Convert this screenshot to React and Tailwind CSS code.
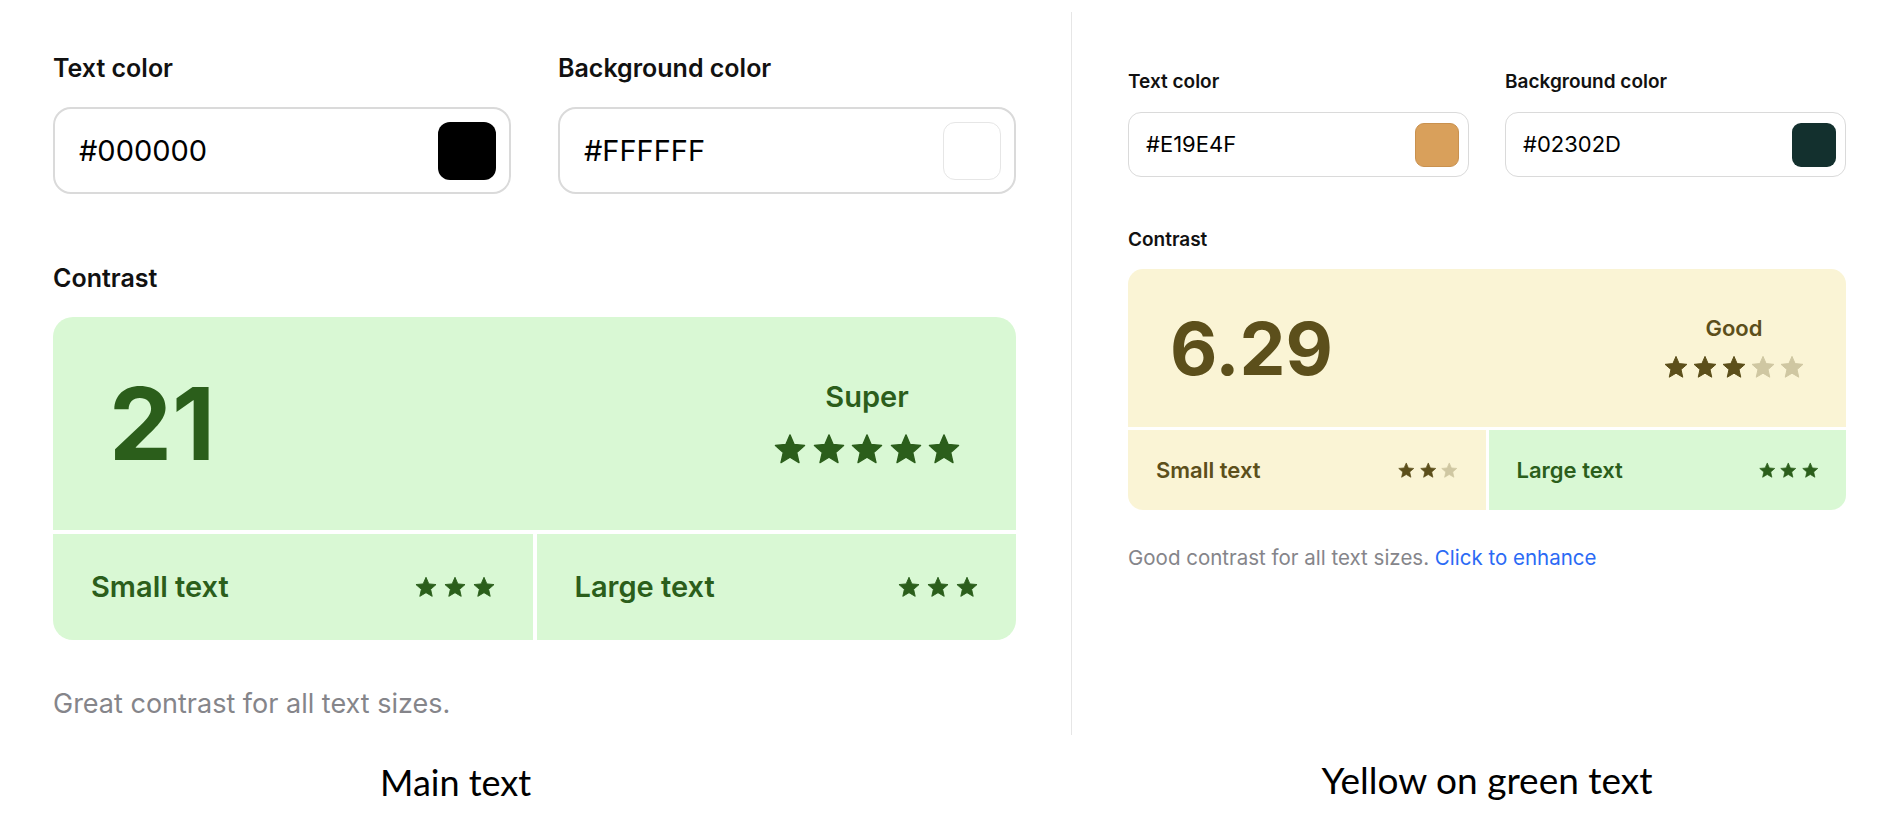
import React from "react";

const GREEN_FG = "#2b5e1b";
const OLIVE = "#5c4f1b";
const OLIVE_FADED = "#cfc7a2";

const STAR_POINTS =
  "12,1.4 15.12,8.61 22.94,9.35 17.04,14.54 18.76,22.2 12,18.2 5.24,22.2 6.96,14.54 1.06,9.35 8.88,8.61";

const Star = ({ size, color }) => (
  <svg width={size} height={size} viewBox="0 0 24 24" className="shrink-0">
    <polygon points={STAR_POINTS} fill={color} stroke={color} strokeWidth="1" strokeLinejoin="round" />
  </svg>
);

// colors: array of star colours, one entry per star
const Stars = ({ colors, size, className }) => (
  <div className={`flex items-center ${className}`}>
    {colors.map((c, i) => (
      <Star key={i} size={size} color={c} />
    ))}
  </div>
);

const Swatch = ({ className, color }) => (
  <div className={className} style={{ backgroundColor: color }} />
);

const App = () => {
  return (
    <div className="w-[1889px] h-[816px] bg-white overflow-hidden font-['Inter','Noto_Sans',sans-serif]">
      <div className="flex mt-[12px]">
        {/* Main text panel */}
        <div className="w-[1072px] h-[723px] border-r border-[#e6e6e6] pl-[53px] pt-[40px]">
          <div className="w-[963px] grid grid-cols-2 gap-[47px]">
            <div>
              <div className="text-[25px] leading-[32px] font-semibold text-[#111]">Text color</div>
              <div className="mt-[23px] h-[87px] border-2 border-[#dadada] rounded-[18px] flex items-center justify-between pl-[24px] pr-[13px]">
                <span className="text-[29px] text-black">#000000</span>
                <Swatch className="w-[58px] h-[58px] rounded-[12px]" color="#000000" />
              </div>
            </div>
            <div>
              <div className="text-[25px] leading-[32px] font-semibold text-[#111]">Background color</div>
              <div className="mt-[23px] h-[87px] border-2 border-[#dadada] rounded-[18px] flex items-center justify-between pl-[24px] pr-[13px]">
                <span className="text-[29px] text-black">#FFFFFF</span>
                <Swatch className="w-[58px] h-[58px] rounded-[12px] border border-[#e6e6e6]" color="#ffffff" />
              </div>
            </div>
          </div>

          <div className="mt-[68px] text-[25px] leading-[32px] font-semibold text-[#111]">Contrast</div>

          <div className="mt-[23px] w-[963px] rounded-[20px] overflow-hidden flex flex-col gap-[4px]">
            <div className="h-[213px] bg-[#d9f8d4] flex items-center justify-between px-14">
              <span className="text-[100px] font-bold leading-none text-[#2b5e1b]">21</span>
              <div className="flex flex-col items-center">
                <span className="text-[29px] font-semibold leading-none text-[#2b5e1b]">Super</span>
                <Stars className="mt-[22px] gap-[6.5px]" size={32} colors={[GREEN_FG, GREEN_FG, GREEN_FG, GREEN_FG, GREEN_FG]} />
              </div>
            </div>
            <div className="h-[106px] grid grid-cols-2 gap-[4px]">
              <div className="bg-[#d9f8d4] flex items-center justify-between px-[38px]">
                <span className="text-[29px] font-semibold text-[#2b5e1b]">Small text</span>
                <Stars className="gap-[7px]" size={22} colors={[GREEN_FG, GREEN_FG, GREEN_FG]} />
              </div>
              <div className="bg-[#d9f8d4] flex items-center justify-between px-[38px]">
                <span className="text-[29px] font-semibold text-[#2b5e1b]">Large text</span>
                <Stars className="gap-[7px]" size={22} colors={[GREEN_FG, GREEN_FG, GREEN_FG]} />
              </div>
            </div>
          </div>

          <p className="mt-[46px] text-[27px] leading-[36px] text-[#85858a]">Great contrast for all text sizes.</p>
        </div>

        {/* Yellow on green panel */}
        <div className="pl-[56px] pt-[58px]">
          <div className="w-[718px] grid grid-cols-2 gap-[36px]">
            <div>
              <div className="text-[19px] leading-[24px] font-semibold text-[#111]">Text color</div>
              <div className="mt-[18px] h-[65px] border-[1.5px] border-[#dadada] rounded-[13px] flex items-center justify-between pl-[17px] pr-[9px]">
                <span className="text-[22px] text-black">#E19E4F</span>
                <Swatch className="w-[44px] h-[44px] rounded-[9px] border border-[#c9914f]" color="#d9a05b" />
              </div>
            </div>
            <div>
              <div className="text-[19px] leading-[24px] font-semibold text-[#111]">Background color</div>
              <div className="mt-[18px] h-[65px] border-[1.5px] border-[#dadada] rounded-[13px] flex items-center justify-between pl-[17px] pr-[9px]">
                <span className="text-[22px] text-black">#02302D</span>
                <Swatch className="w-[44px] h-[44px] rounded-[9px]" color="#13302e" />
              </div>
            </div>
          </div>

          <div className="mt-[51px] text-[19px] leading-[24px] font-semibold text-[#111]">Contrast</div>

          <div className="mt-[17px] w-[718px] rounded-[15px] overflow-hidden flex flex-col gap-[3px]">
            <div className="h-[158px] bg-[#faf4d5] flex items-center justify-between px-[42px]">
              <span className="text-[73px] font-bold leading-none text-[#5c4f1b]">6.29</span>
              <div className="flex flex-col items-center">
                <span className="text-[22px] font-semibold leading-none text-[#5c4f1b]">Good</span>
                <Stars className="mt-[16px] gap-[5px]" size={24} colors={[OLIVE, OLIVE, OLIVE, OLIVE_FADED, OLIVE_FADED]} />
              </div>
            </div>
            <div className="h-[80px] grid grid-cols-2 gap-[3px]">
              <div className="bg-[#faf4d5] flex items-center justify-between px-[28px]">
                <span className="text-[22px] font-semibold text-[#5c4f1b]">Small text</span>
                <Stars className="gap-[5px]" size={16.5} colors={[OLIVE, OLIVE, OLIVE_FADED]} />
              </div>
              <div className="bg-[#d9f8d4] flex items-center justify-between px-[28px]">
                <span className="text-[22px] font-semibold text-[#2b5e1b]">Large text</span>
                <Stars className="gap-[5px]" size={16.5} colors={[GREEN_FG, GREEN_FG, GREEN_FG]} />
              </div>
            </div>
          </div>

          <p className="mt-[34px] text-[20.5px] leading-[27px] text-[#85858a]">
            Good contrast for all text sizes. <span className="text-[#2b6af5]">Click to enhance</span>
          </p>
        </div>
      </div>

      {/* Captions */}
      <div className="flex font-['Lato',sans-serif] text-black">
        <div className="w-[1072px] pl-[380px] pt-[26px] text-[36px] leading-[43px]">Main text</div>
        <div className="pl-[56px] pt-[23px]">
          <div className="w-[718px] text-center text-[37px] leading-[43px]">Yellow on green text</div>
        </div>
      </div>
    </div>
  );
};

export default App;
